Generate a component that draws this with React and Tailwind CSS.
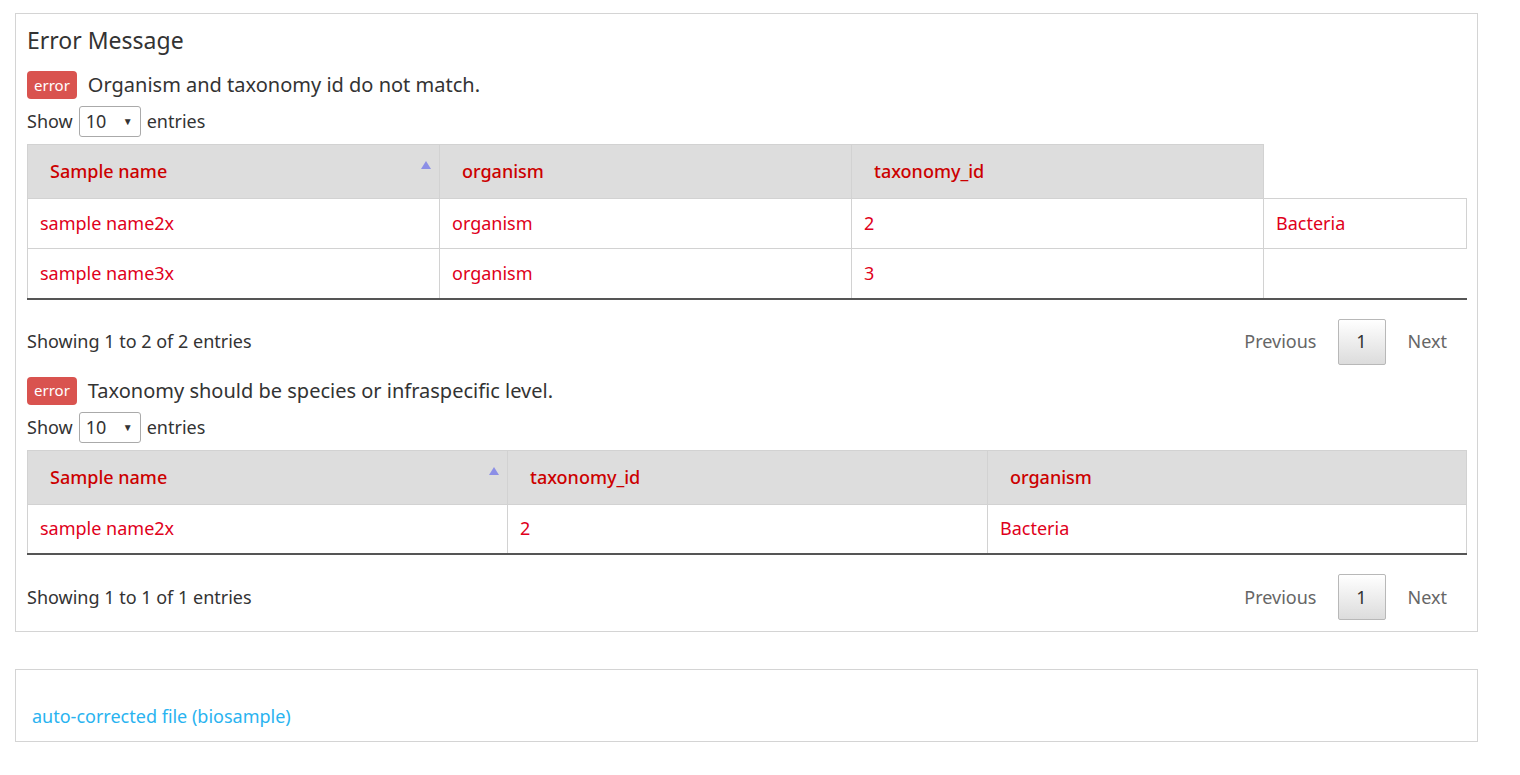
import { useState } from "react";

const font = { fontFamily: '"Noto Sans", "Liberation Sans", sans-serif' };

function Badge() {
    return <span className="inline-flex h-[28px] items-center rounded-[4px] bg-[#d9534f] px-[7px] text-[15px] leading-none text-white">error</span>;
}

function ShowEntries() {
    const [value, setValue] = useState("10");
    return (
        <div className="flex items-center gap-[6px] text-[18px] text-[#333]">
            <span>Show</span>
            <div className="relative">
                <select className="h-[31px] w-[62px] appearance-none rounded-[3px] border border-[#aaa] bg-white pl-[6px] text-[18px] text-[#333] outline-none" value={value} onChange={(e) => setValue(e.target.value)}>
                    <option>10</option><option>25</option><option>50</option><option>100</option>
                </select>
                <span className="pointer-events-none absolute right-[8px] top-[8px] text-[10px] text-[#333]">▼</span>
            </div>
            <span>entries</span>
        </div>
    );
}

function SortArrow() {
    return (
        <svg className="absolute right-[8px] top-[16px]" width="10" height="8" viewBox="0 0 10 8"><path d="M5 0 L10 8 L0 8 Z" fill="#8c8fe6" /></svg>
    );
}

function Footer({ total }) {
    return (
        <div className="flex items-center justify-between text-[18px]">
            <span className="text-[#333]">Showing 1 to {total} of {total} entries</span>
            <div className="flex items-center">
                <span className="px-[18px] py-[9px] text-[#666]">Previous</span>
                <span className="ml-[3px] flex h-[46px] w-[48px] items-center justify-center rounded-[2px] border border-[#b8b8b8] bg-gradient-to-b from-white to-[#dcdcdc] text-[#333]">1</span>
                <span className="ml-[3px] px-[19px] py-[9px] text-[#666]">Next</span>
            </div>
        </div>
    );
}

const th = "relative h-[54px] border border-[#d2d2d2] bg-[#dddddd] pl-[22px] text-left font-medium text-[#cc0000]";
const td = "h-[50px] border border-[#d2d2d2] pl-[12px] text-left text-[#e0001b]";

function Message({ children }) {
    return (
        <div className="flex h-[28px] items-center gap-[11px]"><Badge /><span className="text-[20px] leading-[28px] text-[#333]">{children}</span></div>
    );
}

export default function App() {
    return (
        <div className="min-h-screen bg-white pt-[13px] text-[18px]" style={font}>
            <section className="ml-[15px] w-[1463px] border border-[#d4d4d4] px-[11px] pb-[11px] pt-[13px]">
                <h2 className="text-[23px] leading-[26px] text-[#333]">Error Message</h2>

                <div className="mt-[18px]"><Message>Organism and taxonomy id do not match.</Message></div>
                <div className="mt-[7px]"><ShowEntries /></div>
                <table className="mt-[7px] w-[1439px] table-fixed border-collapse border-b-2 border-b-[#555]">
                    <colgroup><col className="w-[412px]" /><col className="w-[412px]" /><col className="w-[412px]" /><col className="w-[203px]" /></colgroup>
                    <thead>
                        <tr><th className={th}>Sample name<SortArrow /></th><th className={th}>organism</th><th className={th}>taxonomy_id</th></tr>
                    </thead>
                    <tbody>
                        <tr><td className={td}>sample name2x</td><td className={td}>organism</td><td className={td}>2</td><td className={td}>Bacteria</td></tr>
                        <tr><td className={td}>sample name3x</td><td className={td}>organism</td><td className={td}>3</td></tr>
                    </tbody>
                </table>
                <div className="mt-[19px]"><Footer total={2} /></div>

                <div className="mt-[12px]"><Message>Taxonomy should be species or infraspecific level.</Message></div>
                <div className="mt-[7px]"><ShowEntries /></div>
                <table className="mt-[7px] w-[1439px] table-fixed border-collapse border-b-2 border-b-[#555]">
                    <colgroup><col className="w-[480px]" /><col className="w-[480px]" /><col className="w-[479px]" /></colgroup>
                    <thead>
                        <tr><th className={th}>Sample name<SortArrow /></th><th className={th}>taxonomy_id</th><th className={th}>organism</th></tr>
                    </thead>
                    <tbody>
                        <tr><td className={td}>sample name2x</td><td className={td}>2</td><td className={td}>Bacteria</td></tr>
                    </tbody>
                </table>
                <div className="mt-[19px]"><Footer total={1} /></div>
            </section>

            <section className="ml-[15px] mt-[37px] w-[1463px] border border-[#d4d4d4] px-[16px] pb-[11px] pt-[33px]">
                <a href="#" className="text-[18px] leading-[26px] text-[#29b3f0]">auto-corrected file (biosample)</a>
            </section>
        </div>
    );
}
